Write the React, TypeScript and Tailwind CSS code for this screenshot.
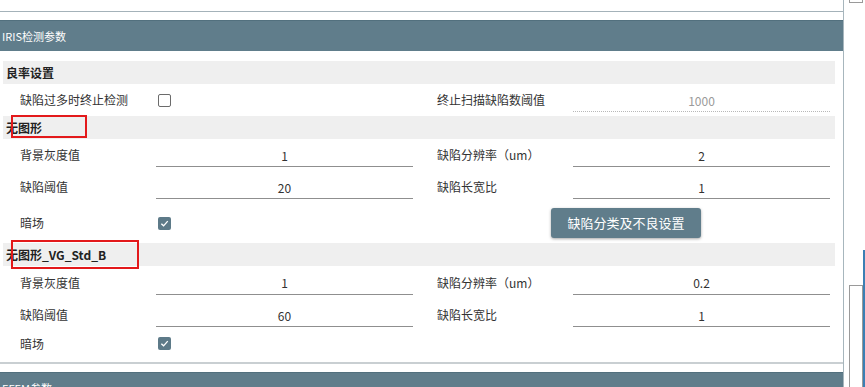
import React from "react"

type Field = { label: string; value: string }

function Checkbox({ checked }: { checked?: boolean }) {
  if (checked) {
    return (
      <div className="ml-[2px] flex h-[13px] w-[13px] items-center justify-center rounded-[2px] bg-[#5d7a88]">
        <svg width="9" height="9" viewBox="0 0 10 10">
          <path d="M1.5 5.2 L4 7.6 L8.6 2.4" fill="none" stroke="white" strokeWidth="1.5" />
        </svg>
      </div>
    )
  }
  return <div className="ml-[2px] h-[13px] w-[13px] rounded-[2px] border-[1.5px] border-[#6b6b6b] bg-white" />
}

function Input({ value, muted }: { value: string; muted?: boolean }) {
  return (
    <div
      className={
        muted
          ? "flex h-[22px] translate-y-[1px] items-center justify-center border-b border-dotted border-[#b8b8b8] text-[#9a9a9a]"
          : "flex h-[22px] translate-y-[1px] items-center justify-center border-b border-[#8f8f8f] text-[#333]"
      }
    >
      {value}
    </div>
  )
}

function GroupHeader({ title, mark }: { title: string; mark?: string }) {
  return (
    <div className="relative flex h-[23px] items-center bg-[#efefef] pl-[3px] text-[12px] font-bold text-[#222]">
      {title}
      {mark && <div className={"pointer-events-none absolute border-2 border-[#e3191b] " + mark} />}
    </div>
  )
}

function FieldRow({ left, right, h }: { left: Field; right: Field; h: string }) {
  return (
    <div className={"grid grid-cols-[136px_257px_24px_136px_257px] items-center pl-[17px] " + h}>
      <span>{left.label}</span>
      <Input value={left.value} />
      <span />
      <span>{right.label}</span>
      <Input value={right.value} />
    </div>
  )
}

export default function App() {
  return (
    <div
      className="flex h-[387px] w-[865px] overflow-hidden bg-white text-[12px] text-[#333]"
      style={{ fontFamily: '"Noto Sans CJK SC", "Noto Sans", "Liberation Sans", sans-serif' }}
    >
      <div className="flex w-[844px] flex-col border-r border-[#a7b6bd]">
        <div className="h-[12px] shrink-0 border-b border-[#a4b2b9] bg-white" />
        <div className="h-[8px] shrink-0" />
        <div className="flex h-[31px] shrink-0 items-center border-t border-[#52707e] bg-[#607d8b] pl-[2px] text-[11px] text-white">
          IRIS检测参数
        </div>

        <div className="shrink-0 border-b-2 border-[#c9cfd2] pb-[6px] pl-[3px] pr-[8px] pt-[10px]">
          <GroupHeader title="良率设置" />
          <div className="grid h-[32px] grid-cols-[136px_257px_24px_136px_257px] items-center pl-[17px]">
            <span>缺陷过多时终止检测</span>
            <Checkbox />
            <span />
            <span>终止扫描缺陷数阈值</span>
            <Input value="1000" muted />
          </div>

          <GroupHeader title="无图形" mark="left-[8px] top-[-1px] h-[23px] w-[76px]" />
          <FieldRow h="h-[32px]" left={{ label: "背景灰度值", value: "1" }} right={{ label: "缺陷分辨率（um）", value: "2" }} />
          <FieldRow h="h-[32px]" left={{ label: "缺陷阈值", value: "20" }} right={{ label: "缺陷长宽比", value: "1" }} />
          <div className="grid h-[40px] grid-cols-[136px_257px_24px_393px] items-center pl-[17px]">
            <span>暗场</span>
            <Checkbox checked />
            <span />
            <div className="pl-[114px]">
              <button className="h-[30px] w-[150px] rounded-[3px] bg-[#607d8b] text-[13px] text-white shadow-[0_1px_3px_rgba(0,0,0,0.35)]">
                缺陷分类及不良设置
              </button>
            </div>
          </div>

          <GroupHeader title="无图形_VG_Std_B" mark="left-[8px] top-[-3px] h-[29px] w-[128px]" />
          <FieldRow h="h-[33px]" left={{ label: "背景灰度值", value: "1" }} right={{ label: "缺陷分辨率（um）", value: "0.2" }} />
          <FieldRow h="h-[32px]" left={{ label: "缺陷阈值", value: "60" }} right={{ label: "缺陷长宽比", value: "1" }} />
          <div className="grid h-[25px] grid-cols-[136px_257px] items-center pl-[17px]">
            <span>暗场</span>
            <Checkbox checked />
          </div>
        </div>

        <div className="h-[8px] shrink-0" />
        <div className="flex h-[31px] shrink-0 items-start border-t border-[#52707e] bg-[#607d8b] pl-[2px] pt-[7px] text-[11px] text-white">
          EFEM参数
        </div>
      </div>

      <div className="relative flex w-[21px] flex-col">
        <div className="ml-[5px] h-[3px] w-[14px] border-x border-b border-[#9a9a9a]" />
        <div className="flex-1" />
        <div className="ml-[5px] h-[102px] w-[14px] border-x border-t border-[#9a9a9a]" />
        <div className="absolute bottom-0 right-0 top-[250px] w-[2px] bg-[#3b7fb4]" />
      </div>
    </div>
  )
}
